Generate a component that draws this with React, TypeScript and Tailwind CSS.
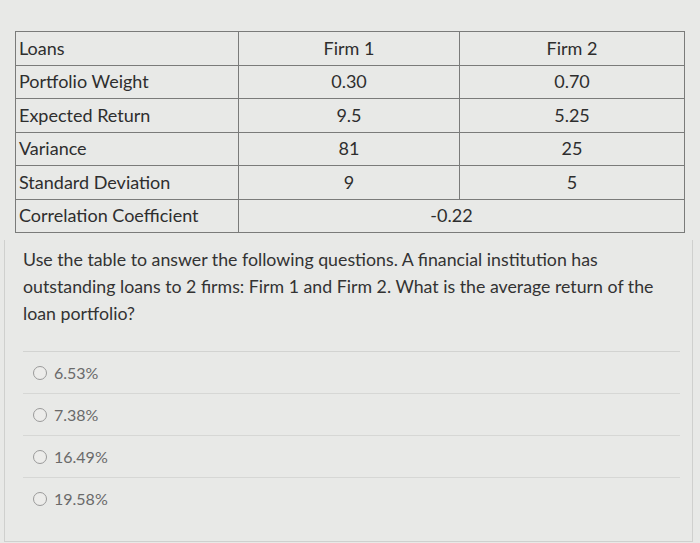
const ROWS = [
  ["Loans", "Firm 1", "Firm 2"],
  ["Portfolio Weight", "0.30", "0.70"],
  ["Expected Return", "9.5", "5.25"],
  ["Variance", "81", "25"],
  ["Standard Deviation", "9", "5"],
];

const OPTIONS = ["6.53%", "7.38%", "16.49%", "19.58%"];

export default function App() {
  return (
    <div
      className="h-[543px] w-[700px] overflow-hidden bg-[#e8e9e7] text-[#2e2e2e]"
      style={{ fontFamily: "Lato, 'Open Sans', sans-serif" }}
    >
      <div className="px-[15px] pt-[31px]">
        <table className="w-[670px] table-fixed border-collapse text-[18px]">
          <colgroup>
            <col className="w-[223px]" />
            <col className="w-[221px]" />
            <col />
          </colgroup>
          <tbody>
            {ROWS.map((r) => (
              <tr key={r[0]} className="h-[33.5px]">
                <td className="border border-[#7a7b7a] pl-[3px] align-middle">{r[0]}</td>
                <td className="border border-[#7a7b7a] text-center align-middle">{r[1]}</td>
                <td className="border border-[#7a7b7a] text-center align-middle">{r[2]}</td>
              </tr>
            ))}
            <tr className="h-[33.5px]">
              <td className="border border-[#7a7b7a] pl-[3px] align-middle">Correlation Coefficient</td>
              <td colSpan={2} className="border border-[#7a7b7a] pr-[20px] text-center align-middle">
                -0.22
              </td>
            </tr>
          </tbody>
        </table>
      </div>

      <div className="mt-[7px] ml-[4px] mr-[7px] h-[302px] border-b border-l border-r border-[#cfd0ce]">
        <p className="pl-[18px] pt-[6px] pr-[20px] text-[17.75px] leading-[27px] text-[#333]">
          Use the table to answer the following questions. A financial institution has outstanding loans to 2 firms: Firm 1 and Firm 2. What is the average return of the loan portfolio?
        </p>
        <div className="mt-[24px] ml-[18px] mr-[12px] border-t border-[#d2d3d1]">
          {OPTIONS.map((o, i) => (
            <div
              key={o}
              className={
                i < OPTIONS.length - 1
                  ? "flex h-[42px] items-center gap-[7px] border-b border-[#d6d7d5] pl-[10px] text-[16px] text-[#6a6a6a]"
                  : "flex h-[42px] items-center gap-[7px] pl-[10px] text-[16px] text-[#6a6a6a]"
              }
            >
              <span className="h-[14px] w-[14px] rounded-full border border-[#9a9a9a] bg-[#ececea]" />
              {o}
            </div>
          ))}
        </div>
      </div>
    </div>
  );
}
